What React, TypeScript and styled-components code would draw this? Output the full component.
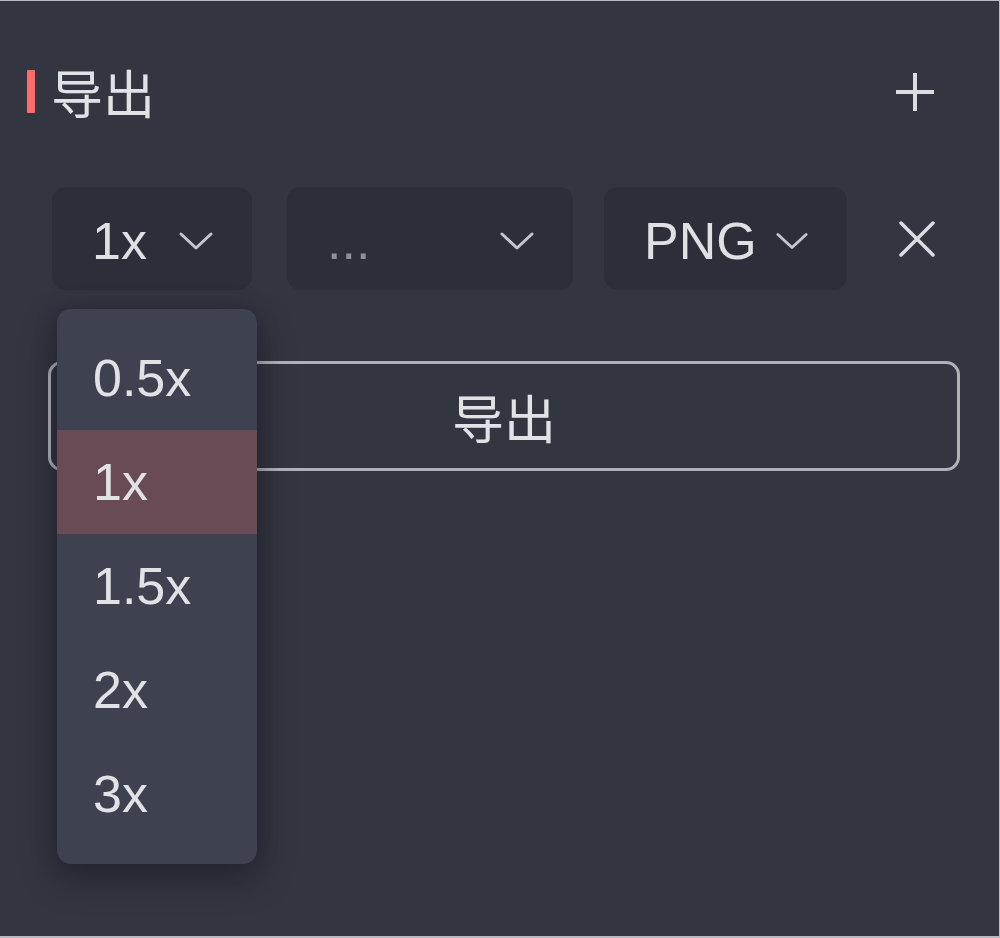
import React from "react";
import styled, { createGlobalStyle } from "styled-components";

const Global = createGlobalStyle`
  html, body { margin: 0; padding: 0; background: #b8bac1; }
  body { width: 1000px; height: 938px; overflow: hidden; }
  #root { padding-top: 1px; }
`;

const FONT = `"Liberation Sans", "Noto Sans CJK SC", Arial, sans-serif`;
const CJK = `"Noto Sans CJK SC", "Liberation Sans", sans-serif`;

const Panel = styled.div`
  box-sizing: border-box;
  width: 999px;
  height: 935px;
  background: #333541;
  padding: 69px 64px 0 27px;
  font-family: ${FONT};
  color: #e1e2e6;
`;

const Header = styled.div`
  display: flex;
  align-items: center;
  height: 43px;
`;

const Accent = styled.div`
  width: 8px;
  height: 43px;
  background: #fe6b6b;
  border-radius: 1px;
`;

const Title = styled.div`
  font-family: ${CJK};
  font-size: 52px;
  line-height: 43px;
  margin-left: 16px;
  flex: 1;
`;

const IconButton = styled.div<{ $size: number }>`
  width: ${(p) => p.$size}px;
  height: ${(p) => p.$size}px;
  display: flex;
  align-items: center;
  justify-content: center;
`;

const Body = styled.div`
  margin-top: 74px;
  padding-left: 21px;
`;

const Row = styled.div`
  display: flex;
  align-items: center;
  padding-left: 4px;
`;

const SelectWrap = styled.div<{ $gap: number }>`
  position: relative;
  margin-left: ${(p) => p.$gap}px;
`;

const Select = styled.div<{ $w: number }>`
  box-sizing: border-box;
  width: ${(p) => p.$w}px;
  height: 103px;
  border-radius: 14px;
  background: #2c2e3a;
  display: flex;
  align-items: center;
  justify-content: space-between;
  padding: 0 39px 0 40px;
`;

const Value = styled.span<{ $dim?: boolean }>`
  font-size: 52px;
  line-height: 1;
  color: ${(p) => (p.$dim ? "#8d8f99" : "#dfe0e4")};
  position: relative;
  top: 2px;
`;

const CloseWrap = styled.div`
  margin-left: auto;
  display: flex;
  align-items: center;
`;

const ExportButton = styled.button`
  box-sizing: border-box;
  width: 912px;
  height: 110px;
  margin-top: 71px;
  border: 3px solid #b1b2b8;
  border-radius: 14px;
  background: transparent;
  color: #e1e2e6;
  font-family: ${CJK};
  font-size: 52px;
  display: flex;
  align-items: center;
  justify-content: center;
  padding: 0;
`;

const Menu = styled.div`
  position: absolute;
  top: calc(100% + 19px);
  left: 5px;
  width: 200px;
  box-sizing: border-box;
  padding: 17px 0 18px;
  background: #3d4150;
  border-radius: 14px;
  box-shadow: 0 14px 36px rgba(10, 12, 20, 0.35), 0 0 22px rgba(10, 12, 20, 0.18);
  z-index: 10;
`;

const MenuItem = styled.div<{ $active?: boolean }>`
  height: 104px;
  display: flex;
  align-items: center;
  padding-left: 36px;
  font-size: 52px;
  color: #e1e2e6;
  background: ${(p) => (p.$active ? "#694b55" : "transparent")};
`;

const Chevron = ({ w = 34 }: { w?: number }) => (
  <svg width={w} height="20" viewBox="0 0 34 20" style={{ position: "relative", top: 2 }}>
    <polyline points="2,3 17,17 32,3" fill="none" stroke="#c5c6cc" strokeWidth="3" strokeLinecap="round" strokeLinejoin="round" />
  </svg>
);

const PlusIcon = () => (
  <svg width="40" height="40" viewBox="0 0 40 40">
    <path d="M20 1 V39 M1 20 H39" stroke="#dcdde1" strokeWidth="4" />
  </svg>
);

const CloseIcon = () => (
  <svg width="36" height="36" viewBox="0 0 36 36">
    <path d="M2 2 L34 34 M34 2 L2 34" stroke="#dcdde1" strokeWidth="3.5" strokeLinecap="round" />
  </svg>
);

const scales = ["0.5x", "1x", "1.5x", "2x", "3x"];

export default function App() {
  return (
    <>
      <Global />
      <Panel>
        <Header>
          <Accent />
          <Title>导出</Title>
          <IconButton $size={40}>
            <PlusIcon />
          </IconButton>
        </Header>
        <Body>
          <Row>
            <SelectWrap $gap={0}>
              <Select $w={200}>
                <Value>1x</Value>
                <Chevron />
              </Select>
              <Menu>
                {scales.map((s) => (
                  <MenuItem key={s} $active={s === "1x"}>
                    {s}
                  </MenuItem>
                ))}
              </Menu>
            </SelectWrap>
            <SelectWrap $gap={35}>
              <Select $w={286}>
                <Value $dim>...</Value>
                <Chevron />
              </Select>
            </SelectWrap>
            <SelectWrap $gap={31}>
              <Select $w={243}>
                <Value>PNG</Value>
                <Chevron w={32} />
              </Select>
            </SelectWrap>
            <CloseWrap>
              <IconButton $size={36}>
                <CloseIcon />
              </IconButton>
            </CloseWrap>
          </Row>
          <ExportButton>导出</ExportButton>
        </Body>
      </Panel>
    </>
  );
}
